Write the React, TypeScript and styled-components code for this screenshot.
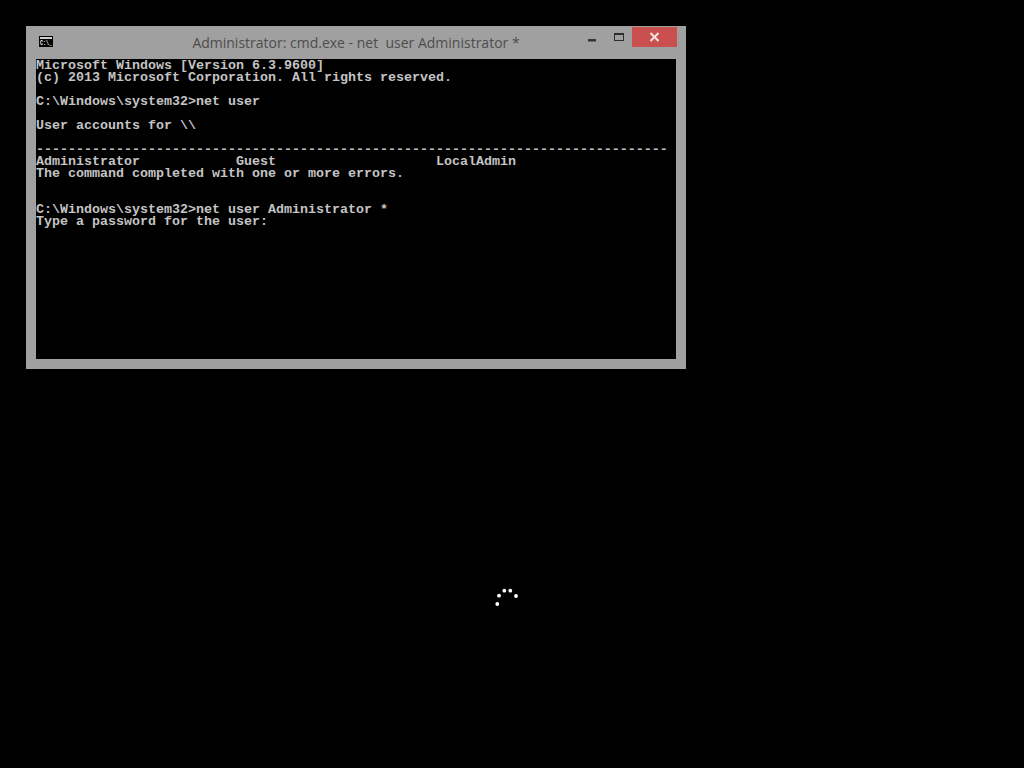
import React from "react";
import styled, { createGlobalStyle } from "styled-components";

const Global = createGlobalStyle`
  html, body { margin: 0; padding: 0; background: #000; }
  #root { width: 1024px; height: 768px; overflow: hidden; }
`;

const Desktop = styled.div`
  width: 1024px;
  height: 768px;
  box-sizing: border-box;
  padding: 26px 0 0 26px;
  background: #000;
`;

const Window = styled.section`
  width: 660px;
  height: 343px;
  box-sizing: border-box;
  padding: 0 10px 10px;
  background: #a0a0a0;
  display: flex;
  flex-direction: column;
`;

const TitleBar = styled.header`
  height: 33px;
  flex: none;
  display: flex;
  align-items: flex-start;
  position: relative;
`;

const AppIcon = styled.svg`
  width: 14px;
  height: 11px;
  margin: 10px 0 0 3px;
  flex: none;
  overflow: visible;
`;

const Title = styled.div`
  position: absolute;
  left: 0;
  right: 0;
  top: 7px;
  text-align: center;
  font: 14px/20px "Open Sans", "Noto Sans", sans-serif;
  color: #4d4d4d;
  white-space: pre;
`;

const Controls = styled.div`
  margin-left: auto;
  margin-right: -1px;
  display: flex;
  align-items: flex-start;
  padding-top: 1px;
  position: relative;
`;

const ControlButton = styled.div`
  width: 27px;
  height: 20px;
  display: flex;
  align-items: center;
  justify-content: center;
  flex: none;
`;

const CloseButton = styled.div`
  width: 45px;
  height: 20px;
  background: #c9504f;
  display: flex;
  align-items: center;
  justify-content: center;
  flex: none;
`;

const Terminal = styled.pre`
  flex: 1;
  margin: 0;
  padding-top: 1px;
  background: #000;
  color: #c4c4c4;
  font: bold 13.333px/12px "Liberation Mono", "DejaVu Sans Mono", monospace;
`;

const Spinner = styled.svg`
  display: block;
  width: 30px;
  height: 24px;
  margin: 215px 0 0 465px;
`;

const lines = [
  "Microsoft Windows [Version 6.3.9600]",
  "(c) 2013 Microsoft Corporation. All rights reserved.",
  "",
  "C:\\Windows\\system32>net user",
  "",
  "User accounts for \\\\",
  "",
  "-".repeat(79),
  "Administrator            Guest                    LocalAdmin",
  "The command completed with one or more errors.",
  "",
  "",
  "C:\\Windows\\system32>net user Administrator *",
  "Type a password for the user:",
].join("\n");

const dots = [
  [6.3, 20],
  [8, 11.7],
  [13.3, 6.7],
  [19.3, 6.7],
  [25, 12],
];

export default function App() {
  return (
    <>
      <Global />
      <Desktop>
        <Window>
          <TitleBar>
            <AppIcon viewBox="0 0 14 11">
              <rect width="14" height="11" fill="#000" />
              <rect x="1" y="1" width="12" height="2" fill="#cfcfcf" />
              <text
                x="1"
                y="9.2"
                fontFamily="Liberation Mono, monospace"
                fontSize="6.5"
                fontWeight="700"
                fill="#f2f2f2"
                textLength="12"
                lengthAdjust="spacingAndGlyphs"
              >
                C:\_
              </text>
            </AppIcon>
            <Title>{"Administrator: cmd.exe - net  user Administrator *"}</Title>
            <Controls>
              <ControlButton>
                <svg width="11" height="10" viewBox="0 0 11 10">
                  <rect x="2" y="7" width="8" height="2.5" fill="#333" />
                </svg>
              </ControlButton>
              <ControlButton>
                <svg width="11" height="10" viewBox="0 0 11 10">
                  <rect x="1.5" y="1.5" width="9" height="7" fill="none" stroke="#2e2e2e" strokeWidth="1" />
                  <rect x="1" y="1" width="10" height="2" fill="#2e2e2e" />
                </svg>
              </ControlButton>
              <CloseButton>
                <svg width="11" height="10" viewBox="0 0 11 10">
                  <path d="M1.5 1 L9.5 9 M9.5 1 L1.5 9" stroke="#f4e4e4" strokeWidth="2" />
                </svg>
              </CloseButton>
            </Controls>
          </TitleBar>
          <Terminal>{lines}</Terminal>
        </Window>
        <Spinner viewBox="0 0 30 24">
          {dots.map(([x, y]) => (
            <circle key={x} cx={x} cy={y} r="1.9" fill="#fff" />
          ))}
        </Spinner>
      </Desktop>
    </>
  );
}
